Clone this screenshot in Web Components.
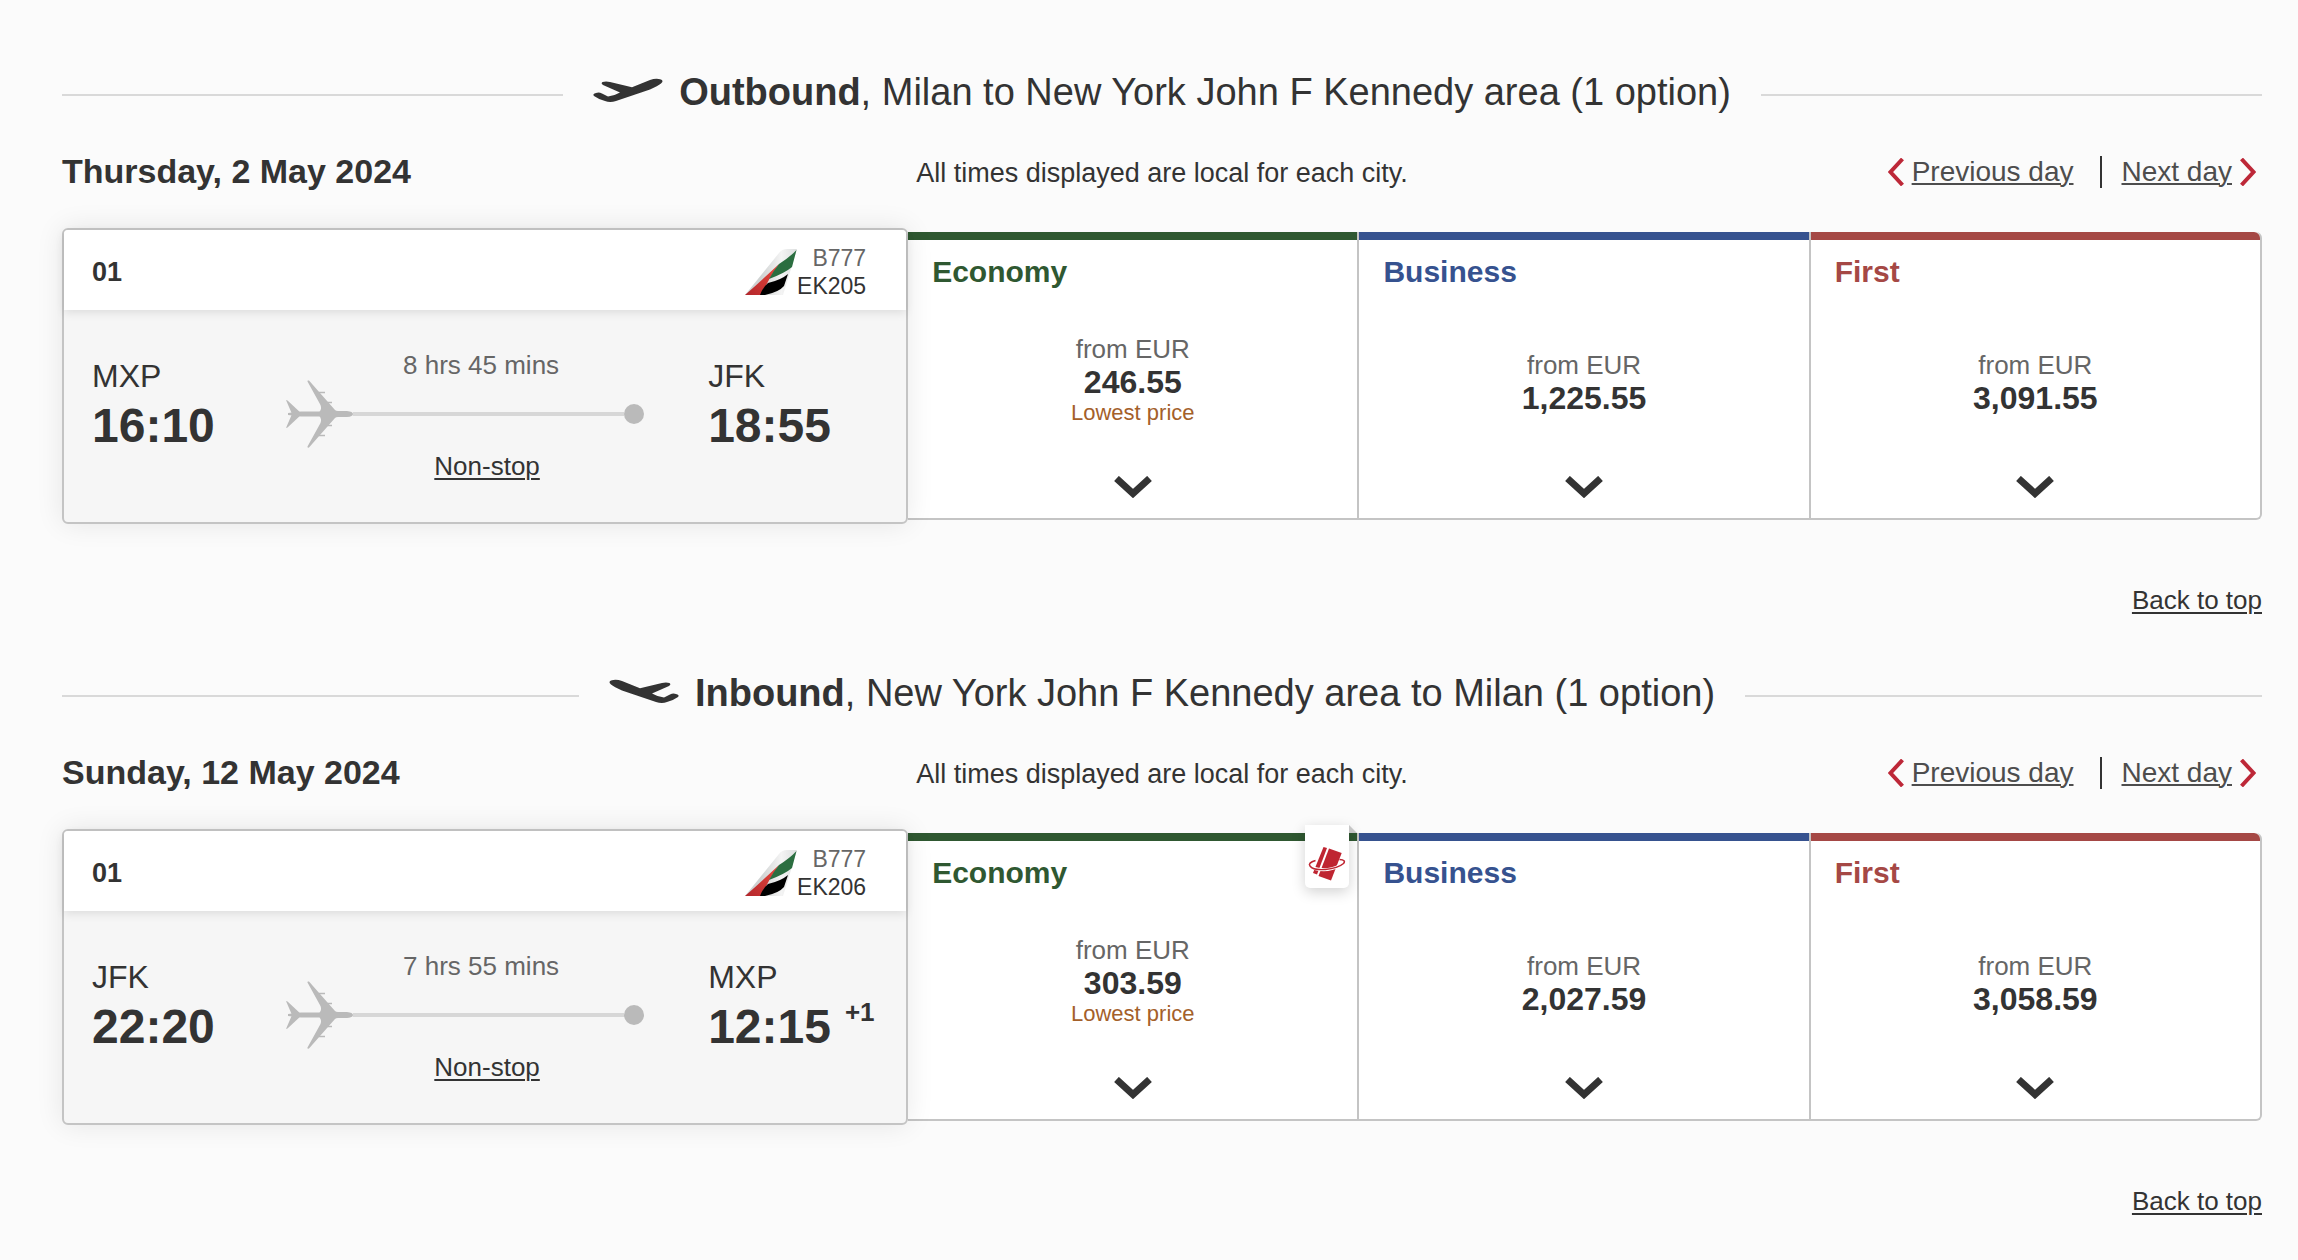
<!DOCTYPE html>
<html lang="en">
<head>
<meta charset="utf-8">
<title>Choose your flights</title>
<style>
  body {
    margin: 0;
    background: #fbfbfb;
    color: #333;
    font-family: "Liberation Sans", Arial, sans-serif;
  }
</style>
</head>
<body>
<flight-results>
  <flight-leg direction="outbound" heading="Outbound" route="Milan to New York John F Kennedy area (1 option)" date="Thursday, 2 May 2024">
    <flight-card slot="flight" number="01" aircraft="B777" code="EK205" from="MXP" departs="16:10" to="JFK" arrives="18:55" duration="8 hrs 45 mins"></flight-card>
    <fare-option cabin="economy" name="Economy" price="246.55" note="Lowest price"></fare-option>
    <fare-option cabin="business" name="Business" price="1,225.55"></fare-option>
    <fare-option cabin="first" name="First" price="3,091.55"></fare-option>
  </flight-leg>
  <flight-leg direction="inbound" heading="Inbound" route="New York John F Kennedy area to Milan (1 option)" date="Sunday, 12 May 2024">
    <flight-card slot="flight" number="01" aircraft="B777" code="EK206" from="JFK" departs="22:20" to="MXP" arrives="12:15" day-shift="+1" duration="7 hrs 55 mins"></flight-card>
    <fare-option cabin="economy" name="Economy" price="303.59" note="Lowest price"><reward-badge slot="badge"></reward-badge></fare-option>
    <fare-option cabin="business" name="Business" price="2,027.59"></fare-option>
    <fare-option cabin="first" name="First" price="3,058.59"></fare-option>
  </flight-leg>
</flight-results>

<script>
class BaseElement extends HTMLElement {
  connectedCallback() {
    if (this.shadowRoot) return;
    this.attachShadow({ mode: "open" }).innerHTML = this.render();
  }
  attr(name) { return this.getAttribute(name) || ""; }
}

customElements.define("flight-results", class extends BaseElement {
  render() {
    return `
      <style>
        :host { display: block; padding: 70px 36px 43px 62px; }
        main { display: flex; flex-direction: column; gap: 55px; }
      </style>
      <main><slot></slot></main>`;
  }
});

customElements.define("plane-icon", class extends BaseElement {
  render() {
    return `
      <style>
        :host { display: block; }
        :host([direction="inbound"]) svg { transform: scaleX(-1); }
        svg { display: block; }
      </style>
      <svg width="70" height="24" viewBox="0 0 70 24" fill="#333" aria-hidden="true">
        <path d="M1 18 Q-1 16 3 15 Q6 14 9 15.500 L15 18.500 Q22 17.500 27 14.500 L10 7 Q7.500 5.500 9.500 4 Q13 3 17 4 L39 9.300 L57 2 Q63 0 68 1.500 Q71 3 68 5.500 Q65 8 57 11.500 L23 23 Q17 25 12 23 Q5 21 1 18Z"/>
      </svg>`;
  }
});

customElements.define("day-nav", class extends BaseElement {
  render() {
    return `
      <style>
        :host { display: block; }
        nav { display: flex; justify-content: flex-end; align-items: center; padding: 2px 6px 0 0; font-size: 28px; line-height: 38px; }
        a { display: flex; align-items: center; gap: 8px; color: #4d4d4d; text-decoration: none; }
        span { text-decoration: underline; text-decoration-thickness: 2px; text-underline-offset: 2px; }
        svg { fill: none; stroke: #bd2838; stroke-width: 4; }
        i { width: 2px; height: 32px; margin: 0 20px 0 26px; background: #333; }
      </style>
      <nav aria-label="Change day">
        <a href="#previous"><svg width="16" height="28" viewBox="0 0 16 28"><path d="M14.500 1 L2.500 14 L14.500 27"/></svg><span>Previous day</span></a>
        <i></i>
        <a href="#next"><span>Next day</span><svg width="16" height="28" viewBox="0 0 16 28"><path d="M1.500 1 L13.500 14 L1.500 27"/></svg></a>
      </nav>`;
  }
});

customElements.define("flight-leg", class extends BaseElement {
  render() {
    return `
      <style>
        :host { display: block; }
        header { display: flex; align-items: center; gap: 30px; }
        header::before, header::after { content: ""; flex: 1; height: 2px; background: #d9d9d9; }
        .title { display: flex; align-items: center; gap: 16px; padding-bottom: 6px; }
        h2 { margin: 0; font-size: 38px; line-height: 44px; font-weight: 400; }
        plane-icon { padding-bottom: 4px; }
        .info { display: grid; grid-template-columns: 1fr auto 1fr; align-items: center; margin: 31px 0 37px; }
        h3 { margin: 0; font-size: 34px; line-height: 40px; }
        p { margin: 0; padding-top: 4px; font-size: 27px; line-height: 36px; }
        .row { display: grid; grid-template-columns: 5fr 8fr; }
        .fares { display: grid; grid-template-columns: repeat(3, 1fr); margin: 4px 0; }
        .back { display: flex; justify-content: flex-end; margin-top: 60px; font-size: 26px; line-height: 32px; }
        .back a { color: #333; text-decoration-thickness: 2px; text-underline-offset: 3px; }
      </style>
      <section>
        <header>
          <div class="title">
            <plane-icon direction="${this.attr("direction")}"></plane-icon>
            <h2><b>${this.attr("heading")}</b>, ${this.attr("route")}</h2>
          </div>
        </header>
        <div class="info">
          <h3>${this.attr("date")}</h3>
          <p>All times displayed are local for each city.</p>
          <day-nav></day-nav>
        </div>
        <div class="row">
          <slot name="flight"></slot>
          <div class="fares"><slot></slot></div>
        </div>
        <div class="back"><a href="#top">Back to top</a></div>
      </section>`;
  }
});

customElements.define("airline-tail", class extends BaseElement {
  render() {
    return `
      <style>:host, svg { display: block; }</style>
      <svg width="52" height="46" viewBox="0 0 52 46" aria-hidden="true">
        <defs>
          <linearGradient id="fin" x1="0" x2="1"><stop offset=".3" stop-color="#cfd2d2"/><stop offset=".7" stop-color="#f4f4f4"/><stop offset="1" stop-color="#dcdede"/></linearGradient>
          <linearGradient id="red" x1="0" y1="1" x2="1" y2="0"><stop offset="0" stop-color="#b3262b"/><stop offset="1" stop-color="#ea4a3e"/></linearGradient>
        </defs>
        <path fill="url(#fin)" d="M0 46 L34 4 Q37 0 42 0 H52 L38 46Z"/>
        <path fill="url(#red)" d="M0 46 Q18 30 34 15 Q24 29 16 46Z"/>
        <path fill="#2b6e40" d="M51.500 1 L47 18 Q40 24 24 30 Q29 21 34 15 Q45 8 51.500 1Z"/>
        <path fill="#000" d="M43 25 L39 37 Q34 43 20 46 H15 Q18 38 23 34 Q36 31 43 25Z"/>
      </svg>`;
  }
});

customElements.define("flight-card", class extends BaseElement {
  render() {
    const shift = this.attr("day-shift");
    return `
      <style>
        :host { display: flex; flex-direction: column; position: relative; z-index: 1; border: 2px solid #c4c4c4; border-radius: 6px; background: #f6f6f6; box-shadow: 0 0 28px rgba(0, 0, 0, .09); }
        .top { display: flex; align-items: center; justify-content: space-between; padding: 14px 40px 10px 28px; border-radius: 4px 4px 0 0; background: #fff; box-shadow: 0 3px 10px rgba(0, 0, 0, .1); }
        .number { font-size: 27px; line-height: 32px; }
        .plane { display: flex; align-items: center; font-size: 23px; line-height: 28px; text-align: right; }
        .plane span { display: block; }
        .type, .duration { color: #666; }
        .body { display: grid; grid-template-columns: 194px 1fr 198px; padding: 40px 0 38px 28px; }
        .stop { padding-top: 6px; }
        .airport { font-size: 32px; line-height: 40px; }
        .time { font-size: 48px; line-height: 60px; font-weight: 700; white-space: nowrap; }
        sup { margin-left: 14px; font-size: 26px; line-height: 0; vertical-align: 22px; }
        .path { margin-right: 64px; text-align: center; font-size: 26px; }
        .duration { padding-left: 32px; line-height: 30px; }
        .line { display: flex; align-items: center; }
        .line i { flex: 1; height: 4px; background: #d7d7d7; }
        .line b { width: 20px; height: 20px; border-radius: 50%; background: #bababa; }
        .line svg { fill: #bababa; stroke: #bababa; }
        .link { padding-left: 44px; line-height: 36px; }
        .link a { color: #333; text-decoration-thickness: 2px; text-underline-offset: 3px; }
      </style>
      <div class="top">
        <b class="number">${this.attr("number")}</b>
        <div class="plane">
          <airline-tail></airline-tail>
          <div><span class="type">${this.attr("aircraft")}</span><span>${this.attr("code")}</span></div>
        </div>
      </div>
      <div class="body">
        <div class="stop">
          <div class="airport">${this.attr("from")}</div>
          <div class="time">${this.attr("departs")}</div>
        </div>
        <div class="path">
          <div class="duration">${this.attr("duration")}</div>
          <div class="line">
            <svg width="67" height="68" viewBox="0 0 67 68" aria-hidden="true">
              <g stroke="none">
                <path d="M2 33 L15 31.500 H33.500 Q36 29 34.500 25 L21.500 1.500 Q21 0 23 .5 L49 30 Q50 31 52 31 H61 Q67 31.500 67 34 Q67 36.500 61 37 H52 Q50 37 49 38 L23 67.500 Q21 68 21.500 66.500 L34.500 43 Q36 39 33.500 36.500 H15 L2 35Z"/>
                <path d="M0 20 L1.500 20.500 L16 34 L1.500 47.500 L0 48 Q3 41 6 34 Q3 27 0 20Z"/>
              </g>
              <path d="M33 12.500 H39 M40 22.500 H46 M40 45.500 H46 M33 55.500 H39" stroke-width="1.500"/>
            </svg>
            <i></i><b></b>
          </div>
          <div class="link"><a href="#details">Non-stop</a></div>
        </div>
        <div class="stop">
          <div class="airport">${this.attr("to")}</div>
          <div class="time">${this.attr("arrives")}${shift ? `<sup>${shift}</sup>` : ""}</div>
        </div>
      </div>`;
  }
});

customElements.define("fare-option", class extends BaseElement {
  render() {
    const note = this.attr("note");
    return `
      <style>
        :host { --cabin: #2f5831; display: flex; flex-direction: column; position: relative; border: solid #c4c4c4; border-width: 0 2px 2px 0; background: #fff; }
        :host([cabin="business"]) { --cabin: #36528f; }
        :host([cabin="first"]) { --cabin: #a54845; border-radius: 0 6px 6px 0; }
        :host([cabin="first"]) .bar { border-top-right-radius: 6px; }
        .bar { height: 8px; background: var(--cabin); }
        h4 { margin: 14px 24px 0; color: var(--cabin); font-size: 30px; line-height: 36px; }
        .price { flex: 1; display: flex; flex-direction: column; justify-content: center; text-align: center; }
        .from { color: #666; font-size: 26px; line-height: 32px; }
        .amount { font-size: 32px; line-height: 34px; }
        .note { margin-bottom: 4px; color: #a4602a; font-size: 22px; line-height: 28px; }
        button { display: flex; justify-content: center; padding: 2px 0 20px; border: 0; background: none; cursor: pointer; }
        svg { fill: none; stroke: #333; stroke-width: 7; }
      </style>
      <div class="bar"></div>
      <h4>${this.attr("name")}</h4>
      <div class="price">
        <span class="from">from EUR</span>
        <b class="amount">${this.attr("price")}</b>
        ${note ? `<span class="note">${note}</span>` : ""}
      </div>
      <button type="button" aria-label="Show ${this.attr("name")} fares"><svg width="38" height="22" viewBox="0 0 38 22"><path d="M2.500 2.500 L19 17.500 L35.500 2.500"/></svg></button>
      <slot name="badge"></slot>`;
  }
});

customElements.define("reward-badge", class extends BaseElement {
  render() {
    return `
      <style>
        :host { position: absolute; top: -8px; right: 8px; display: block; width: 44px; height: 63px; border-radius: 0 0 5px 5px; background: #fff; box-shadow: 0 4px 14px rgba(0, 0, 0, .18); }
        :host::after { content: ""; position: absolute; top: 0; left: 100%; border: 4px solid; border-color: transparent transparent #c6c6c6 #c6c6c6; }
        svg { display: block; }
      </style>
      <svg width="44" height="63" viewBox="0 0 44 63" role="img" aria-label="Classic Rewards">
        <g fill="#bf2531">
          <path d="M18.500 22 L22 23 L12 49.500 L8 48Z"/>
          <path d="M24 23.500 L36.700 28 L26 55.500 L13.500 51Z"/>
        </g>
        <path d="M8 43 Q22 47.500 35 40.500" fill="none" stroke="#fff" stroke-width="3"/>
        <path d="M10.500 35.500 Q2.500 38 5 41 C9 47 31 45 38.500 38.500 Q41.500 35 34.500 34.500" fill="none" stroke="#bf2531" stroke-width="1.500"/>
      </svg>`;
  }
});
</script>
</body>
</html>
